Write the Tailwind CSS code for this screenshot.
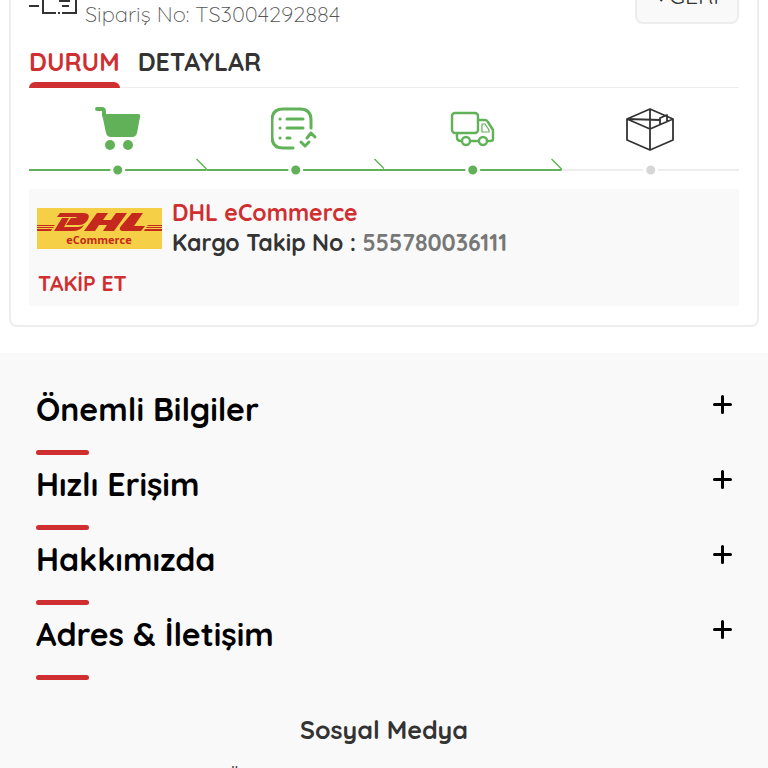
<!DOCTYPE html>
<html lang="tr">
<head>
    <meta charset="UTF-8">
    <meta name="viewport" content="width=device-width, initial-scale=1.0">
    <title>Sipariş Takip</title>
    <script src="https://cdn.jsdelivr.net/npm/@tailwindcss/browser@4"></script>
</head>
<body class="bg-white font-['Quicksand','Lato',sans-serif] text-[#333] overflow-x-hidden">
    <main class="overflow-hidden pb-[26px]">
        <section class="-mt-[66px] mx-[9px] border-2 border-[#ededed] rounded-lg px-[18px] pb-[19px]">
            <!-- Order header -->
            <div class="flex items-end justify-between h-[100px] pb-2">
                <div class="flex items-end gap-2">
                    <svg class="w-12 h-12 mb-3" viewBox="0 0 48 48" fill="none" stroke="#333" stroke-width="2">
                        <path d="M14 10V45H27M33 45H47V10H14M3 31H14M0 38H10M31 28V33H40V28M33 38h7M29 45h2"/>
                    </svg>
                    <p class="text-[22px] leading-7 font-light text-[#555]">Sipariş No: TS3004292884</p>
                </div>
                <button class="flex items-center justify-center w-[104px] h-[52px] mb-1 gap-1.5 border-2 border-[#ededed] rounded-lg bg-[#f9f9f9] pb-1 text-[23px]">
                    <svg class="w-2 h-4" viewBox="0 0 8 16" fill="none" stroke="#333" stroke-width="2"><path d="M7 3L2 8l5 5"/></svg>
                    GERİ
                </button>
            </div>

            <!-- Tabs -->
            <div class="flex gap-[18px] h-[52px] border-b border-[#ededed] text-[25px] font-bold">
                <button class="relative text-[#d02f31] h-full after:absolute after:inset-x-0 after:-bottom-px after:h-[6px] after:rounded-t-md after:bg-[#d02f31]">DURUM</button>
                <button class="h-full">DETAYLAR</button>
            </div>

            <!-- Steps -->
            <ol class="grid grid-cols-4 pt-4">
                <li class="flex flex-col items-center">
                    <svg class="w-12 h-12" viewBox="0 0 48 48" fill="#61b158">
                        <path d="M3 5h5q2 0 2 3v3" fill="none" stroke="#61b158" stroke-width="4" stroke-linecap="round"/>
                        <path d="M8 10H44q3 0 2 3L43 29q-1 4-5 4H17q-4 0-5-4z"/>
                        <circle cx="16" cy="41" r="5"/><circle cx="34" cy="41" r="5"/>
                    </svg>
                    <svg class="w-full h-6" aria-hidden="true"><rect y="17" width="100%" height="2" fill="#61b158"/><circle cx="50%" cy="18" r="6" fill="#61b158" stroke="#fff" stroke-width="3"/><svg x="100%" overflow="visible"><path d="M-10 7L1 18" stroke="#61b158" stroke-width="1.5"/></svg></svg>
                </li>
                <li class="flex flex-col items-center">
                    <svg class="w-12 h-12" viewBox="0 0 48 48" fill="none" stroke="#61b158" stroke-width="3" stroke-linecap="round" stroke-linejoin="round">
                        <path d="M22 44H12Q1 44 1 33V16Q1 5 12 5H29Q40 5 40 16V24"/>
                        <path d="M16 15H32M16 24H32M16 34H19M9 15h.1M9 24h.1M9 34h.1M30 38l4 4 4-4M36 34l4-5 4 4"/>
                    </svg>
                    <svg class="w-full h-6" aria-hidden="true"><rect y="17" width="100%" height="2" fill="#61b158"/><circle cx="50%" cy="18" r="6" fill="#61b158" stroke="#fff" stroke-width="3"/><svg x="100%" overflow="visible"><path d="M-10 7L1 18" stroke="#61b158" stroke-width="1.5"/></svg></svg>
                </li>
                <li class="flex flex-col items-center">
                    <svg class="w-12 h-12" viewBox="0 0 48 48" fill="none" stroke="#61b158" stroke-width="2.4" stroke-linejoin="round">
                        <rect x="3" y="9" width="26" height="20" rx="3"/>
                        <path d="M29 16H36q2 0 3 2L44 26V35q0 2-3 2h-3M30 37H21M12 37q-4 0-4-3V29"/>
                        <path d="M33 20v8h7v-2l-4-6z" stroke-width="1.2"/>
                        <circle cx="17" cy="37" r="4"/><circle cx="34" cy="37" r="4"/>
                    </svg>
                    <svg class="w-full h-6" aria-hidden="true"><rect y="17" width="100%" height="2" fill="#61b158"/><circle cx="50%" cy="18" r="6" fill="#61b158" stroke="#fff" stroke-width="3"/><svg x="100%" overflow="visible"><path d="M-10 7L1 18" stroke="#61b158" stroke-width="1.5"/></svg></svg>
                </li>
                <li class="flex flex-col items-center">
                    <svg class="w-12 h-12" viewBox="0 0 48 48" fill="none" stroke="#333" stroke-width="1.8" stroke-linejoin="round">
                        <path d="M24 5L47 15V36L24 46L1 36V15zM1 15L24 25L47 15M24 5V46M1 15L34 16M34 21V14L41 11V17"/>
                    </svg>
                    <svg class="w-full h-6" aria-hidden="true"><rect y="17" width="100%" height="2" fill="#ededed"/><circle cx="50%" cy="18" r="6" fill="#d6d6d6" stroke="#fff" stroke-width="3"/></svg>
                </li>
            </ol>

            <!-- Cargo info -->
            <div class="mt-[13px] bg-[#f9f9f9] px-2 pt-[9px] pb-2 font-bold">
                <div class="flex items-center gap-[10px]">
                    <svg class="w-[125px] h-[41px] shrink-0" viewBox="0 0 125 41" role="img" aria-label="DHL eCommerce">
                        <rect width="125" height="41" fill="#f5cf46"/>
                        <g fill="#c5281c">
                            <path d="M23 5H46q9 0 4 8-3 4-8 4H29l5-7h5l1-1H20z"/>
                            <path d="M25 10h7l-5 9H41q3 0 6-2-3 6-12 6H17z"/>
                            <path d="M60 5H71l-5 7h8l5-7H90L77 23H66l4-6H62l-4 6H47z"/>
                            <path d="M95 5h11L97 18h11l-4 5H85q-4-1-1-5z"/>
                            <path d="M0 17h18l-1 1H0zM0 19h17l-1 1H0zM0 21h15l-1 2H0zM111 17h14v1h-15zM110 19h15v1h-16zM108 21h17v2h-18z"/>
                        </g>
                        <text x="62" y="36" text-anchor="middle" font-family="Open Sans, sans-serif" font-size="11" font-weight="700" fill="#c5281c">eCommerce</text>
                    </svg>
                    <div class="text-[23px] leading-[30px]">
                        <p class="text-[#d02f31]">DHL eCommerce</p>
                        <p>Kargo Takip No : <span class="text-[#777]">555780036111</span></p>
                    </div>
                </div>
                <a href="#" class="block mt-[10px] pl-px text-[21px] leading-[30px] text-[#d02f31]">TAKİP ET</a>
            </div>
        </section>
    </main>

    <footer class="bg-[#f9f9f9] px-9 pt-[27px]">
        <div class="pt-[9px]">
            <button class="flex w-full items-start justify-between text-left text-[32px] leading-10 font-bold text-black">
                Önemli Bilgiler
                <svg class="w-[19px] h-[19px] mt-1.5" viewBox="0 0 19 19" stroke="#000" stroke-width="3" stroke-linecap="round"><path d="M1.5 9.5h16M9.5 1.5v16"/></svg>
            </button>
            <div class="mt-[21px] w-[53px] h-[5px] rounded-full bg-[#d02f31]"></div>
        </div>
        <div class="pt-[9px]">
            <button class="flex w-full items-start justify-between text-left text-[32px] leading-10 font-bold text-black">
                Hızlı Erişim
                <svg class="w-[19px] h-[19px] mt-1.5" viewBox="0 0 19 19" stroke="#000" stroke-width="3" stroke-linecap="round"><path d="M1.5 9.5h16M9.5 1.5v16"/></svg>
            </button>
            <div class="mt-[21px] w-[53px] h-[5px] rounded-full bg-[#d02f31]"></div>
        </div>
        <div class="pt-[9px]">
            <button class="flex w-full items-start justify-between text-left text-[32px] leading-10 font-bold text-black">
                Hakkımızda
                <svg class="w-[19px] h-[19px] mt-1.5" viewBox="0 0 19 19" stroke="#000" stroke-width="3" stroke-linecap="round"><path d="M1.5 9.5h16M9.5 1.5v16"/></svg>
            </button>
            <div class="mt-[21px] w-[53px] h-[5px] rounded-full bg-[#d02f31]"></div>
        </div>
        <div class="pt-[9px]">
            <button class="flex w-full items-start justify-between text-left text-[32px] leading-10 font-bold text-black">
                Adres &amp; İletişim
                <svg class="w-[19px] h-[19px] mt-1.5" viewBox="0 0 19 19" stroke="#000" stroke-width="3" stroke-linecap="round"><path d="M1.5 9.5h16M9.5 1.5v16"/></svg>
            </button>
            <div class="mt-[21px] w-[53px] h-[5px] rounded-full bg-[#d02f31]"></div>
        </div>
        <h3 class="mt-8 text-center text-[25px] leading-9 font-bold">Sosyal Medya</h3>
        <p class="mt-[15px] pl-[191px] text-xl">Ö</p>
    </footer>
</body>
</html>
